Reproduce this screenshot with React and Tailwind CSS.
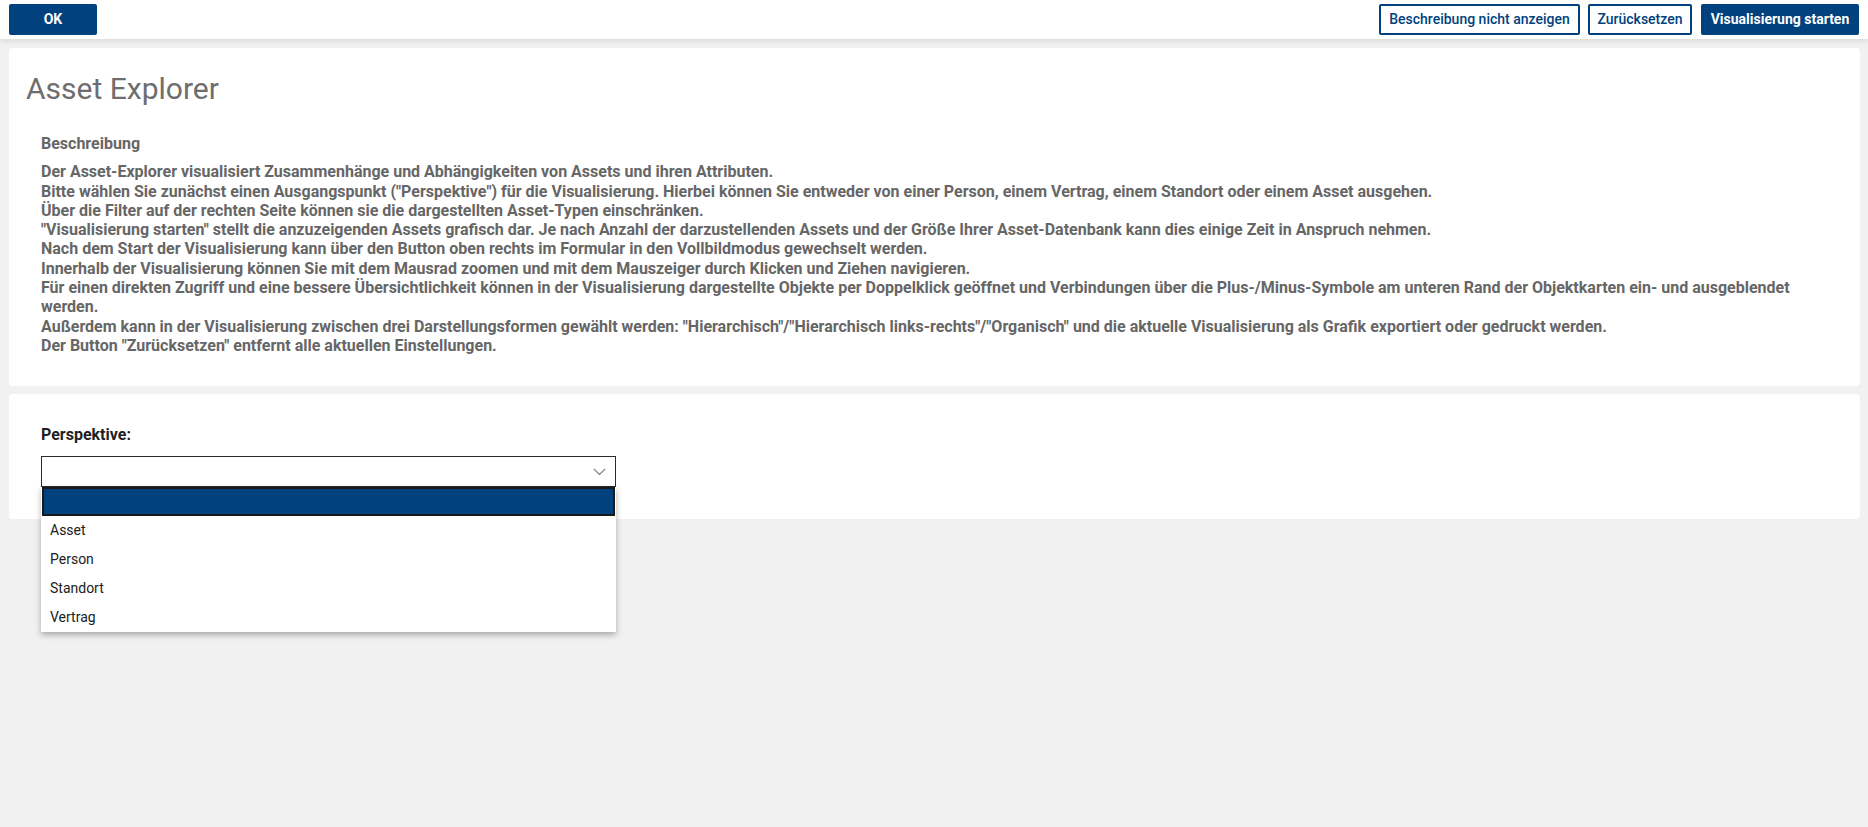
import React from "react";

const lines = [
  "Der Asset-Explorer visualisiert Zusammenhänge und Abhängigkeiten von Assets und ihren Attributen.",
  'Bitte wählen Sie zunächst einen Ausgangspunkt ("Perspektive") für die Visualisierung. Hierbei können Sie entweder von einer Person, einem Vertrag, einem Standort oder einem Asset ausgehen.',
  "Über die Filter auf der rechten Seite können sie die dargestellten Asset-Typen einschränken.",
  '"Visualisierung starten" stellt die anzuzeigenden Assets grafisch dar. Je nach Anzahl der darzustellenden Assets und der Größe Ihrer Asset-Datenbank kann dies einige Zeit in Anspruch nehmen.',
  "Nach dem Start der Visualisierung kann über den Button oben rechts im Formular in den Vollbildmodus gewechselt werden.",
  "Innerhalb der Visualisierung können Sie mit dem Mausrad zoomen und mit dem Mauszeiger durch Klicken und Ziehen navigieren.",
  "Für einen direkten Zugriff und eine bessere Übersichtlichkeit können in der Visualisierung dargestellte Objekte per Doppelklick geöffnet und Verbindungen über die Plus-/Minus-Symbole am unteren Rand der Objektkarten ein- und ausgeblendet",
  "werden.",
  'Außerdem kann in der Visualisierung zwischen drei Darstellungsformen gewählt werden: "Hierarchisch"/"Hierarchisch links-rechts"/"Organisch" und die aktuelle Visualisierung als Grafik exportiert oder gedruckt werden.',
  'Der Button "Zurücksetzen" entfernt alle aktuellen Einstellungen.',
];

const options = ["Asset", "Person", "Standort", "Vertrag"];

export default function App() {
  return (
    <div
      className="min-h-screen bg-[#f1f1f1]"
      style={{ fontFamily: "Roboto, 'Liberation Sans', sans-serif" }}
    >
      <header className="relative z-10 h-[39px] bg-white shadow-[0_2px_6px_rgba(0,0,0,0.10)] flex items-start justify-between pl-[9px] pr-[9px] pt-[4px]">
        <button className="w-[88px] h-[31px] bg-[#00417e] text-white font-bold text-[14px] rounded-[2px]">
          OK
        </button>
        <div className="flex gap-[8px]">
          <button className="w-[201px] h-[31px] border-2 border-[#00417e] text-[#00417e] font-medium text-[14px] rounded-[2px] bg-white">
            Beschreibung nicht anzeigen
          </button>
          <button className="w-[104px] h-[31px] border-2 border-[#00417e] text-[#00417e] font-medium text-[14px] rounded-[2px] bg-white">
            Zurücksetzen
          </button>
          <button className="w-[158px] h-[31px] bg-[#00417e] text-white font-bold text-[14px] rounded-[2px] ml-px">
            Visualisierung starten
          </button>
        </div>
      </header>

      <main className="pl-[9px] pr-[8px] pt-[9px] flex flex-col gap-[8px]">
        <section className="bg-white rounded-[4px] pt-[22px] pb-[31px]">
          <h1 className="pl-[17px] text-[30px] leading-[38px] text-[#6e6e6e] font-normal">
            Asset Explorer
          </h1>
          <div className="pl-[32px] pr-[12px] mt-[26px] text-[16px] leading-[19.3px] font-bold text-[#666666]">
            <div className="mb-[9px]">Beschreibung</div>
            {lines.map((l, i) => (
              <div key={i} className="whitespace-nowrap">
                {l}
              </div>
            ))}
          </div>
        </section>

        <section className="bg-white rounded-[4px] pt-[31px] pb-[32px] pl-[32px]">
          <div className="text-[16px] leading-[20px] font-bold text-[#1f1f1f] mb-[11px]">
            Perspektive:
          </div>
          <div className="relative w-[575px]">
            <div className="h-[31px] border border-[#2b2b2b] bg-white flex items-center justify-end pr-[9px]">
              <svg width="13" height="8" viewBox="0 0 13 8" fill="none">
                <path d="M0.8 0.8 L6.5 6.5 L12.2 0.8" stroke="#7a7a7a" strokeWidth="1.2" />
              </svg>
            </div>
            <div className="absolute left-0 top-[31px] w-[575px] bg-white shadow-[0_3px_6px_rgba(0,0,0,0.3)] z-20">
              <div className="h-[29px] bg-[#00417e] border-2 border-[#1a1a1a] mx-px" />
              {options.map((o) => (
                <div
                  key={o}
                  className="h-[29px] flex items-center pl-[9px] text-[14px] text-[#212121]"
                >
                  {o}
                </div>
              ))}
            </div>
          </div>
        </section>
      </main>
    </div>
  );
}
